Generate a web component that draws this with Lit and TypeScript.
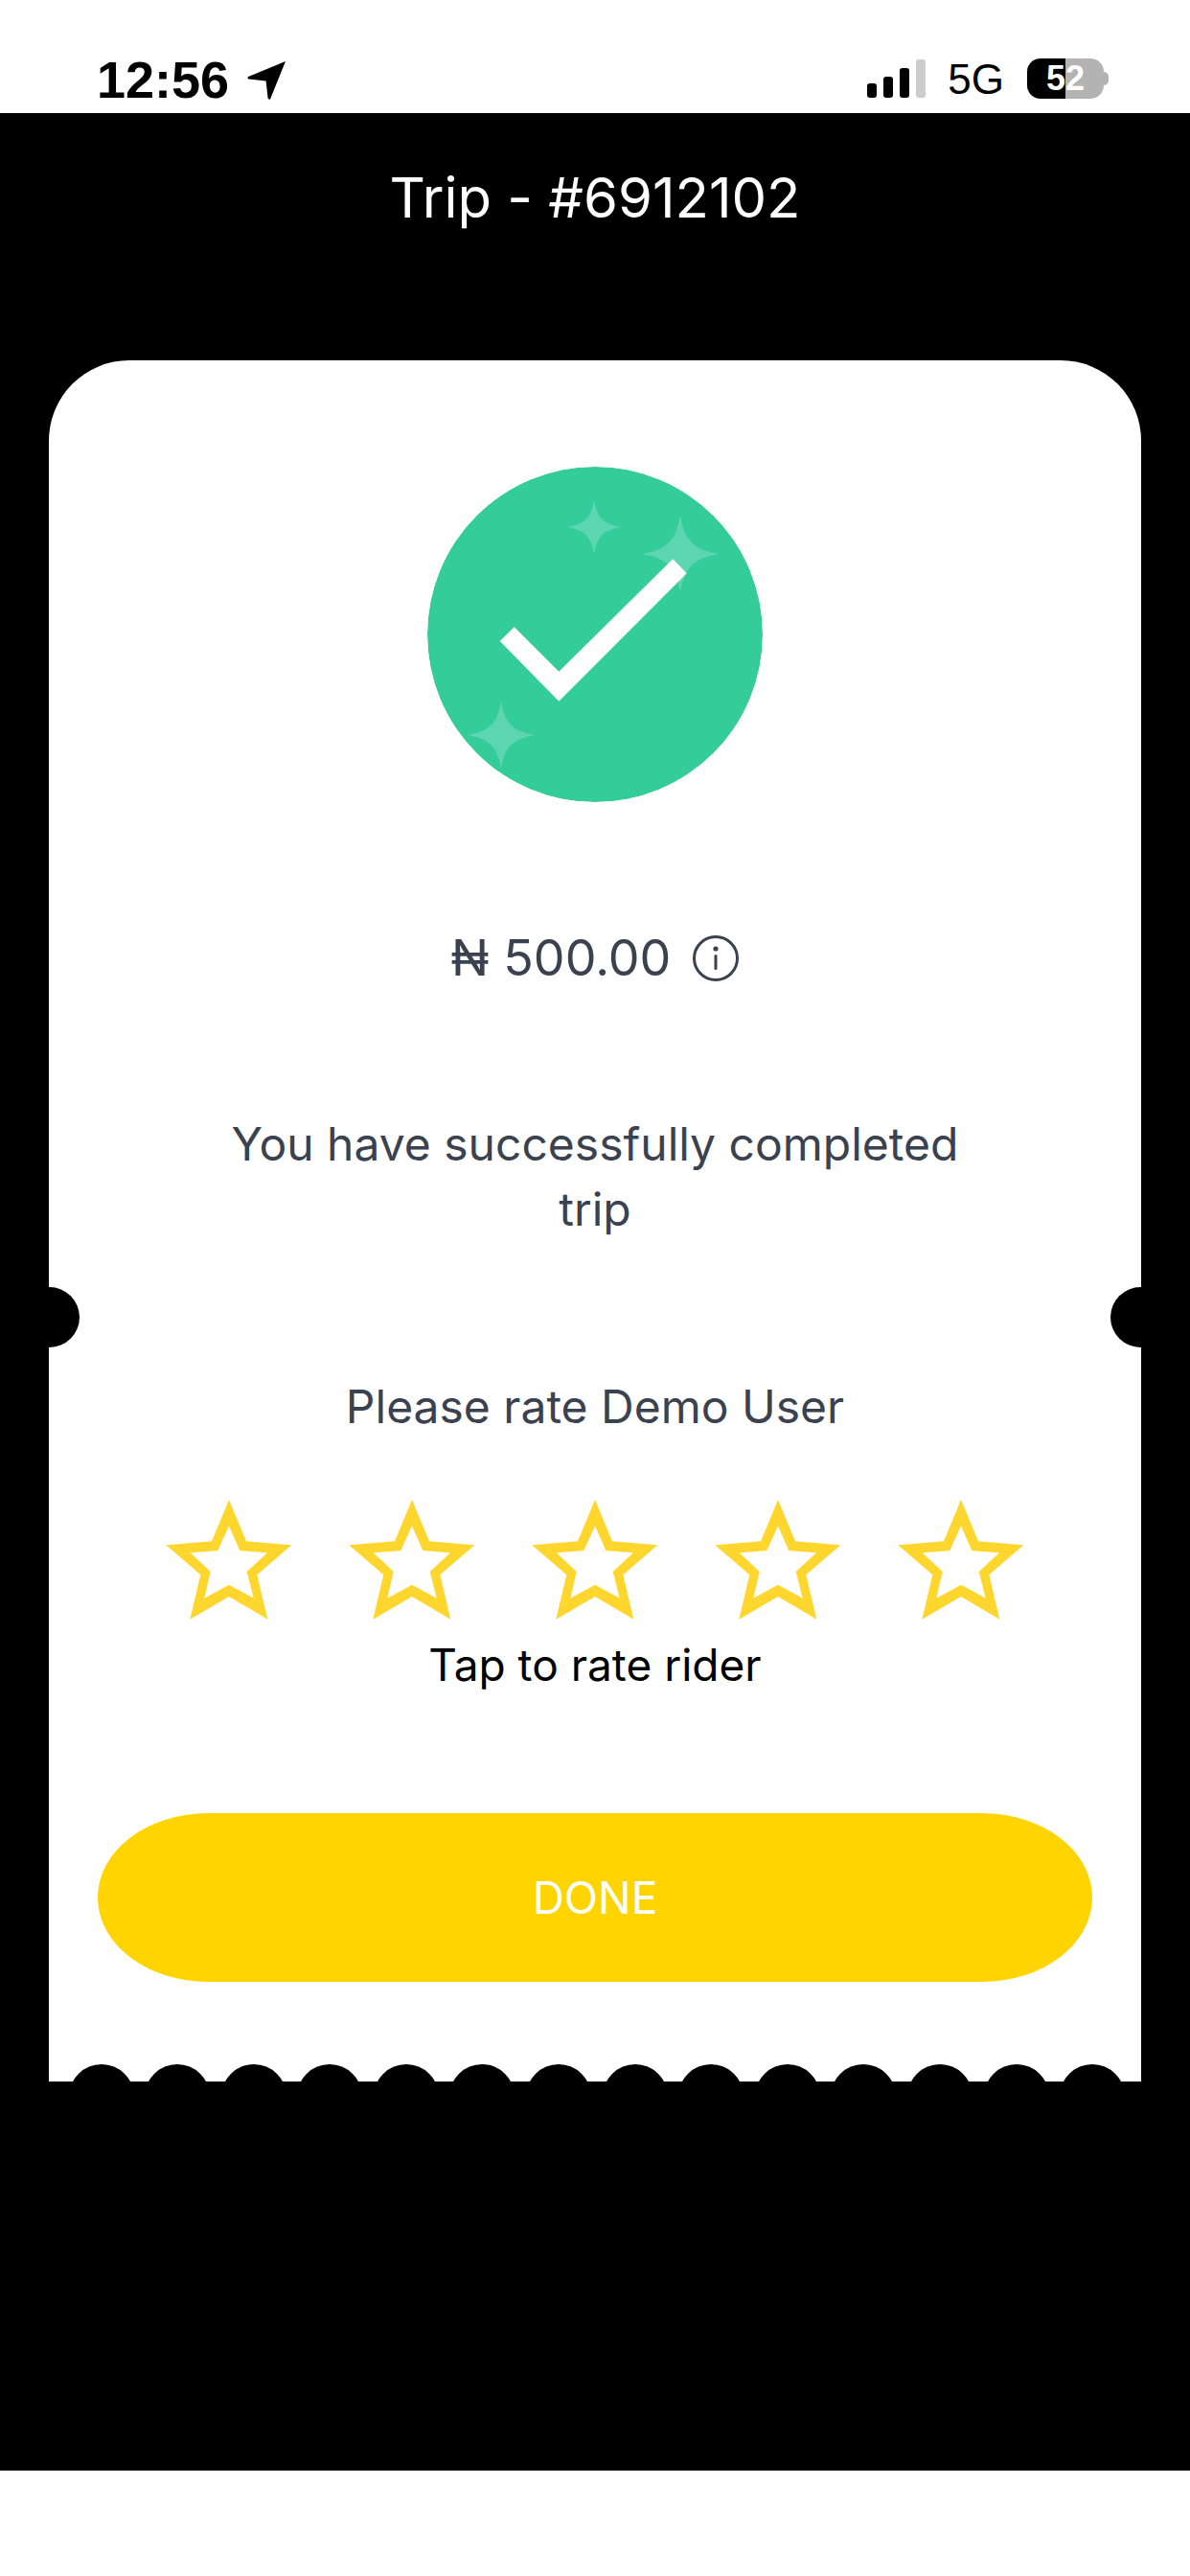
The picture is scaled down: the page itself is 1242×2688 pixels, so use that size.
import { LitElement, html, css, svg } from "lit";
import { customElement } from "lit/decorators.js";

const spark = (cx: number, cy: number, r: number) => {
  const k = r * 0.22;
  return svg`<path d="M${cx} ${cy - r}C${cx + k * 0.5} ${cy - k * 1.6} ${cx + k * 1.6} ${cy - k * 0.5} ${cx + r} ${cy}C${cx + k * 1.6} ${cy + k * 0.5} ${cx + k * 0.5} ${cy + k * 1.6} ${cx} ${cy + r}C${cx - k * 0.5} ${cy + k * 1.6} ${cx - k * 1.6} ${cy + k * 0.5} ${cx - r} ${cy}C${cx - k * 1.6} ${cy - k * 0.5} ${cx - k * 0.5} ${cy - k * 1.6} ${cx} ${cy - r}Z" fill="#5DD6AF"/>`;
};

const star = html`<svg class="star" viewBox="0 0 132 125"><path fill="#FFD62E" fill-rule="evenodd" d="M66 0L84 43.3L131.3 47.3L95.3 78.3L106.3 124.7L66 101L25.3 124.7L36.3 78.3L0.3 47.3L48 43.3ZM66 27.3L54.3 53L25.7 55.3L46.7 75L40.3 102.7L66 88.7L91.7 102.7L84.7 75L106 55.3L77.3 53Z"/></svg>`;

@customElement("app-root")
export class AppRoot extends LitElement {
  static styles = css`
    :host { display: block; width: 1242px; height: 2688px; background: #fff; font-family: Inter, "Noto Sans", sans-serif; overflow: hidden; }
    .page { display: flex; flex-direction: column; height: 2688px; }
    .status { height: 118px; flex: none; display: flex; justify-content: space-between; align-items: flex-start; padding: 56px 85px 0 101px; box-sizing: border-box; color: #000; }
    .left { display: flex; align-items: center; gap: 19px; font-family: "Liberation Sans", Arial, sans-serif; font-weight: 700; font-size: 54px; line-height: 54px; }
    .arrow { width: 41px; height: 41px; }
    .right { display: flex; align-items: flex-start; }
    .signal { width: 62px; height: 41px; margin-top: 6px; }
    .net { font-family: "Liberation Sans", Arial, sans-serif; font-size: 44px; line-height: 44px; margin: 5px 0 0 22px; }
    .battery { position: relative; margin: 5px 0 0 24px; width: 80px; height: 42px; border-radius: 14px; background: linear-gradient(90deg, #000 50%, #b3b3b3 50%); color: #fff; font-family: "Liberation Sans", Arial, sans-serif; font-weight: 700; font-size: 36px; line-height: 42px; text-align: center; }
    .cap { width: 5px; height: 14px; margin: 19px 0 0 0; background: #b3b3b3; border-radius: 0 7px 7px 0; }
    main { background: #000; flex: none; height: 2460px; display: flex; flex-direction: column; }
    h1 { margin: 0; padding-top: 54px; height: 204px; box-sizing: content-box; height: 68px; padding-bottom: 136px; text-align: center; color: #fff; font-weight: 400; font-size: 58px; line-height: 68px; }
    .card { position: relative; margin: 0 51px; height: 1796px; background: #fff; border-radius: 84px 84px 0 0; display: flex; flex-direction: column; align-items: center; padding-top: 111px; box-sizing: border-box; color: #3b424f; overflow: hidden; }
    .badge { width: 350px; height: 350px; display: block; border-radius: 50%; flex: none; }
    .amount { margin-top: 131px; display: flex; align-items: center; gap: 23px; font-size: 52px; line-height: 64px; }
    .info { width: 48px; height: 48px; }
    .msg { margin: 128px 0 0; width: 800px; text-align: center; font-size: 48px; line-height: 68px; }
    .rate { margin: 140px 0 0; font-size: 48px; line-height: 64px; }
    .stars { margin-top: 65px; display: flex; gap: 59px; }
    .star { width: 132px; height: 125px; display: block; }
    .tap { margin: 17px 0 0; color: #000; font-size: 46px; line-height: 60px; }
    .done { margin-top: 125px; width: 1038px; height: 176px; flex: none; border: 0; background: #ffd400; color: #fff; font: 400 46px/176px Inter, sans-serif; border-radius: 115px / 88px; padding: 0; }
    .notch { position: absolute; top: 967px; width: 63px; height: 63px; border-radius: 50%; background: #000; }
    .notch.l { left: -31px; }
    .notch.r { right: -31px; }
    .scallops { position: absolute; left: 20.5px; top: 1778px; display: flex; gap: 11.6px; }
    .scallops i { display: block; width: 68px; height: 68px; border-radius: 50%; background: #000; }
    footer { flex: 1; background: #fff; }
  `;

  render() {
    return html`<div class="page">
      <div class="status">
        <div class="left"><span>12:56</span>
          <svg class="arrow" viewBox="0 0 41 41"><path d="M40 1L24 40.5C23 41 22 40.5 21.6 39.5L19.6 21.6L1.6 19.6C0.4 19 0 17.6 1.2 17Z" fill="#000"/></svg>
        </div>
        <div class="right">
          <svg class="signal" viewBox="0 0 62 41"><rect x="0" y="25" width="10" height="15" rx="3" fill="#000"/><rect x="17" y="18" width="10" height="22" rx="3" fill="#000"/><rect x="34" y="9" width="10" height="31" rx="3" fill="#000"/><rect x="51" y="0" width="10" height="40" rx="3" fill="#ccc"/></svg>
          <span class="net">5G</span>
          <div class="battery">52</div><div class="cap"></div>
        </div>
      </div>
      <main>
        <h1>Trip - #6912102</h1>
        <section class="card">
          <svg class="badge" viewBox="0 0 350 350">
            <circle cx="175" cy="175" r="175" fill="#34CC99"/>
            ${spark(174, 63, 28)}${spark(264, 91, 40)}${spark(77, 280, 35)}
            <path d="M90.7 167.3L75.7 182L137.3 244.7L270.7 111.3L256.3 96.3L137.3 213.7Z" fill="#fff"/>
          </svg>
          <div class="amount"><span>₦ 500.00</span>
            <svg class="info" viewBox="0 0 48 48"><circle cx="24" cy="24" r="22.5" fill="none" stroke="#3b424f" stroke-width="3"/><circle cx="24" cy="14" r="2.6" fill="#3b424f"/><rect x="22.5" y="20" width="3" height="16" rx="1.5" fill="#3b424f"/></svg>
          </div>
          <p class="msg">You have successfully completed trip</p>
          <p class="rate">Please rate Demo User</p>
          <div class="stars">${star}${star}${star}${star}${star}</div>
          <p class="tap">Tap to rate rider</p>
          <button class="done">DONE</button>
          <div class="notch l"></div><div class="notch r"></div>
          <div class="scallops">${Array.from({ length: 14 }, () => html`<i></i>`)}</div>
        </section>
      </main>
      <footer></footer>
    </div>`;
  }
}
